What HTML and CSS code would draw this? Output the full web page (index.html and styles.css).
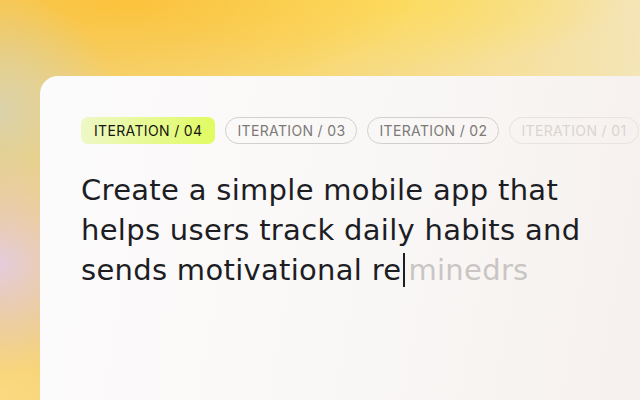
FILE: index.html
```html
<!doctype html>
<html lang="en">
	<head>
		<meta charset="utf-8">
		<meta name="viewport" content="width=device-width, initial-scale=1">
		<title>Iterations</title>
		<link rel="stylesheet" href="styles.css">
	</head>
	<body>

		<main class="card">

			<ul class="iterations">
				<li class="chip current">ITERATION / 04</li>
				<li class="chip">ITERATION / 03</li>
				<li class="chip">ITERATION / 02</li>
				<li class="chip faded">ITERATION / 01</li>
			</ul>

			<p class="prompt">Create a simple mobile app that helps users track daily habits and sends motivational re<span class="caret"></span><span class="ghost">minedrs</span></p>

		</main>

	</body>
</html>
```

FILE: styles.css
```css
/* -------------------------------------------------- */

:root
{
	--text: #1d1d24;
	--muted: #7c7977;
	--ghost: #c9c5c3;
	--line: #d3cfcc;
}

*, *::before, *::after { box-sizing: border-box; }

html, body { height: 100%; }

body
{
	margin: 0;
	overflow: hidden;

	font-family: Inter, 'Noto Sans', sans-serif;
	color: var( --text );

	background:
		radial-gradient( ellipse 120px 110px at 0% 66%, rgba( 228, 204, 220, 1 ), rgba( 228, 204, 220, 0 ) ),
		radial-gradient( ellipse 110px 90px at 0% 100%, rgba( 251, 218, 130, 1 ), rgba( 251, 218, 130, 0 ) ),
		radial-gradient( ellipse 120px 120px at 0% 28%, rgba( 218, 210, 170, 1 ), rgba( 218, 210, 170, 0 ) ),
		radial-gradient( ellipse 300px 90px at 20% 0%, rgba( 252, 194, 56, 0.95 ), rgba( 252, 194, 56, 0 ) ),
		radial-gradient( ellipse 240px 70px at 60% 0%, rgba( 253, 220, 90, 0.9 ), rgba( 253, 220, 90, 0 ) ),
		linear-gradient( 95deg, #f2cd6e 0%, #f8d872 45%, #f4e6bd 100% );
}

/* -------------------------------------------------- */

.card
{
	margin: 76px 0 0 40px;
	padding: 41px 0 0 41px;
	min-height: 340px;
	width: 640px;

	border-radius: 18px 0 0 0;

	background: linear-gradient( 100deg, #fcfbfb 0%, #f9f7f6 55%, #f5efec 100% );
}

/* -------------------------------------------------- */

.iterations
{
	display: flex;
	gap: 10px;

	margin: 0;
	padding: 0;
	list-style: none;
	white-space: nowrap;
}

.chip
{
	flex-shrink: 0;
	height: 27px;
	padding: 0 11px;

	display: flex;
	align-items: center;

	font-size: 14px;
	letter-spacing: 0.35px;
	color: var( --muted );

	border: 1px solid var( --line );
	border-radius: 14px;
}

.chip.current
{
	padding: 0 13px;
	color: #16160f;
	border: none;
	border-radius: 7px;
	background: linear-gradient( 90deg, #edf8c6 0%, #e1fb62 100% );
}

.chip.faded
{
	color: #d9d4d1;
	border-color: #e8e3e0;
}

/* -------------------------------------------------- */

.prompt
{
	width: 530px;
	margin: 26px 0 0;

	font-family: 'DejaVu Sans', sans-serif;
	font-size: 29px;
	line-height: 40px;
	letter-spacing: 0.3px;
}

.caret
{
	display: inline-block;
	width: 2px;
	height: 34px;
	margin: 0 3px 0 2px;
	vertical-align: -7px;
	background: var( --text );
}

.ghost { color: var( --ghost ); }

/* -------------------------------------------------- */
```
